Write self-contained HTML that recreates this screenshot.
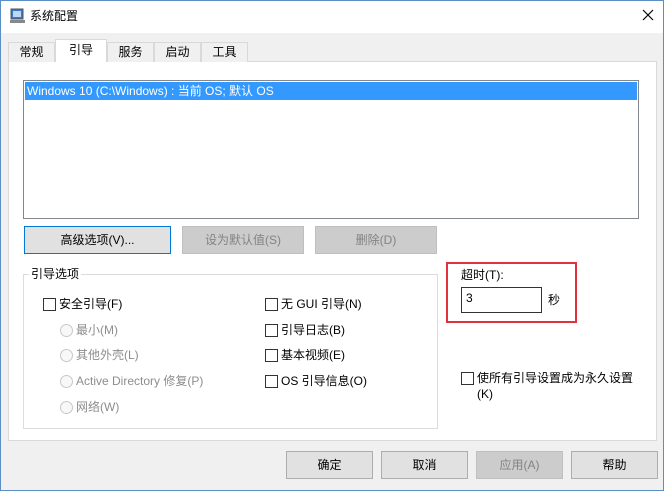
<!DOCTYPE html><html><head><meta charset="utf-8"><style>
*{margin:0;padding:0;box-sizing:border-box}
body{width:664px;height:491px;background:#f0f0f0;font-family:"Liberation Sans","Noto Sans CJK SC",sans-serif;font-size:12px;color:#000;position:relative;overflow:hidden}
.a{position:absolute}
.frame{left:0;top:0;width:664px;height:491px;border:1px solid #5a8fc6;pointer-events:none}
.title{left:0;top:0;width:664px;height:33px;background:#fff}
.tab{position:absolute;top:42px;height:20px;border:1px solid #d9d9d9;border-bottom:none;background:#f0f0f0;text-align:center;line-height:18px}
.btn{position:absolute;height:28px;border:1px solid #adadad;background:#e1e1e1;text-align:center;line-height:26px}
.dis{background:#cccccc;border-color:#bfbfbf;color:#838383}
.cb{position:absolute;width:13px;height:13px;border:1px solid #333;background:#fff}
.rb{position:absolute;width:13px;height:13px;border:1px solid #c8c8c8;border-radius:50%;background:#f8f8f8}
.t{position:absolute;line-height:14px;white-space:nowrap}
.g{color:#8d8d8d}
</style></head><body>
<div class="a title"></div>
<svg class="a" style="left:9px;top:8px" width="17" height="17" viewBox="0 0 17 17"><rect x="2" y="1" width="12" height="10" fill="#3a78c9" stroke="#555"/><rect x="4" y="3" width="8" height="6" fill="#bcd8f4"/><rect x="1" y="12" width="15" height="3" fill="#888"/></svg>
<div class="t" style="left:30px;top:9px;font-size:12px">系统配置</div>
<svg class="a" style="left:642px;top:9px" width="12" height="12"><path d="M1 1L11 11M11 1L1 11" stroke="#000" stroke-width="1.2"/></svg>
<div class="a" style="left:8px;top:61px;width:649px;height:380px;background:#fff;border:1px solid #d9d9d9"></div>
<div class="tab" style="left:8px;width:47px">常规</div>
<div class="tab" style="left:55px;top:39px;height:23px;width:52px;background:#fff;line-height:20px">引导</div>
<div class="tab" style="left:107px;width:47px">服务</div>
<div class="tab" style="left:154px;width:47px">启动</div>
<div class="tab" style="left:201px;width:47px">工具</div>
<div class="a" style="left:23px;top:80px;width:616px;height:139px;border:1px solid #828790;background:#fff"></div>
<div class="a" style="left:25px;top:82px;width:612px;height:18px;background:#3399ff;color:#fff;line-height:18px;padding-left:2px">Windows 10 (C:\Windows) : 当前 OS; 默认 OS</div>
<div class="btn" style="left:24px;top:226px;width:147px;border-color:#0078d7">高级选项(V)...</div>
<div class="btn dis" style="left:182px;top:226px;width:122px">设为默认值(S)</div>
<div class="btn dis" style="left:315px;top:226px;width:122px">删除(D)</div>
<div class="a" style="left:23px;top:274px;width:415px;height:155px;border:1px solid #dcdcdc"></div>
<div class="t" style="left:29px;top:267px;background:#fff;padding:0 2px">引导选项</div>
<div class="cb" style="left:43px;top:298px"></div><div class="t" style="left:59px;top:297px">安全引导(F)</div>
<div class="rb" style="left:60px;top:324px"></div><div class="t g" style="left:76px;top:323px">最小(M)</div>
<div class="rb" style="left:60px;top:349px"></div><div class="t g" style="left:76px;top:348px">其他外壳(L)</div>
<div class="rb" style="left:60px;top:375px"></div><div class="t g" style="left:76px;top:374px">Active Directory 修复(P)</div>
<div class="rb" style="left:60px;top:401px"></div><div class="t g" style="left:76px;top:400px">网络(W)</div>
<div class="cb" style="left:265px;top:298px"></div><div class="t" style="left:281px;top:297px">无 GUI 引导(N)</div>
<div class="cb" style="left:265px;top:324px"></div><div class="t" style="left:281px;top:323px">引导日志(B)</div>
<div class="cb" style="left:265px;top:349px"></div><div class="t" style="left:281px;top:348px">基本视频(E)</div>
<div class="cb" style="left:265px;top:375px"></div><div class="t" style="left:281px;top:374px">OS 引导信息(O)</div>
<div class="a" style="left:446px;top:262px;width:131px;height:61px;border:2px solid #e0313d"></div>
<div class="t" style="left:461px;top:268px">超时(T):</div>
<div class="a" style="left:461px;top:287px;width:81px;height:26px;border:1px solid #333;background:#fff;padding:3px 0 0 4px">3</div>
<div class="t" style="left:548px;top:293px">秒</div>
<div class="cb" style="left:461px;top:372px"></div>
<div class="t" style="left:477px;top:371px">使所有引导设置成为永久设置</div>
<div class="t" style="left:477px;top:387px">(K)</div>
<div class="btn" style="left:286px;top:451px;width:87px">确定</div>
<div class="btn" style="left:381px;top:451px;width:87px">取消</div>
<div class="btn dis" style="left:476px;top:451px;width:87px">应用(A)</div>
<div class="btn" style="left:571px;top:451px;width:87px">帮助</div>
<div class="a frame"></div>
</body></html>
